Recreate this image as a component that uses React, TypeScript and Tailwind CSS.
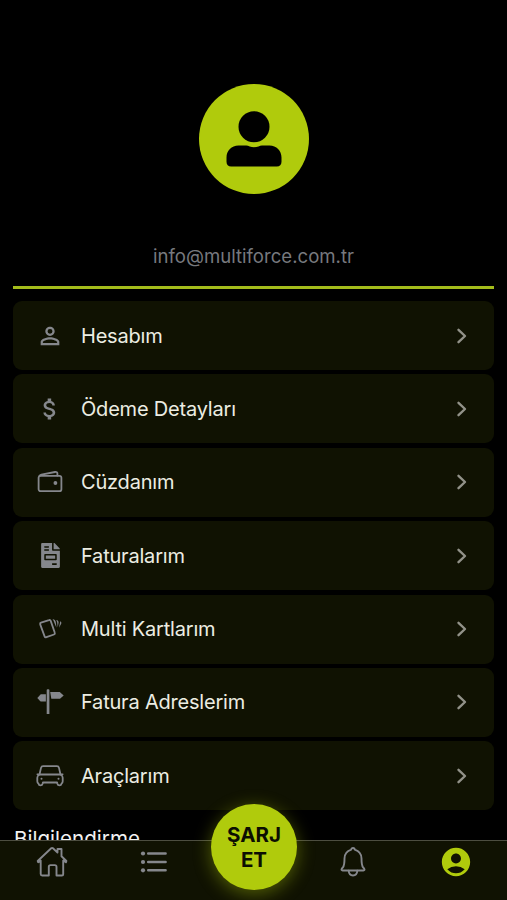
import type { ReactNode } from 'react'
import { FaFileInvoice } from 'react-icons/fa'
import { MdAccountCircle, MdAttachMoney, MdPersonOutline } from 'react-icons/md'

const stroke = {
  fill: 'none',
  stroke: 'currentColor',
  strokeLinecap: 'round',
  strokeLinejoin: 'round'
} as const

const WalletIcon = () => (
  <svg width="26" height="24" viewBox="0 0 26 24" strokeWidth="1.8" {...stroke}>
    <rect x="1.6" y="5.8" width="22.8" height="15.4" rx="2" />
    <path d="M2.4 6C2.8 5.2 3.4 4.9 4.4 4.6L18 2c1.6-.3 2.4.3 2.4 1.5v2" />
    <circle cx="18.4" cy="13" r="1.9" fill="currentColor" stroke="none" />
  </svg>
)

const CardsIcon = () => (
  <svg width="24" height="24" viewBox="0 0 24 24" strokeWidth="1.8" {...stroke}>
    <path d="M3 5.7l8-2.6c.8-.3 1.400 0 1.700.8l4.100 11.900c.3.800 0 1.400-.8 1.700l-7.600 2.700c-.8.3-1.500 0-1.800-.8L2.200 7.400c-.3-.8 0-1.400.8-1.700z" />
    <g fill="currentColor" stroke="none">
      <path d="M14.500 1.900c2 .4 3 1.500 3.300 3.100l.6 5.800-3.100-7.600z" />
      <path d="M18.300 2.900c1.700.3 2.400 1.200 2.300 2.600l-.8 4.800-.7-5.300z" />
      <path d="M22.200 4.300c1.100.5 1.400 1.400 1 2.500l-2.200 3.900.9-4.600z" />
    </g>
  </svg>
)

const SignsIcon = () => (
  <svg width="27" height="26" viewBox="0 0 27 26" fill="currentColor">
    <path d="M9.700 1c0-.5.4-.8.9-.8h.9c.5 0 .9.3.9.8v24H9.700z" />
    <path d="M.3 9l3-3.300c.3-.3.600-.4 1-.4h4.600v7.300H4.300c-.4 0-.7-.1-1-.4z" />
    <path d="M13.200 3h9.100c.4 0 .7.100 1 .4l3.400 3-3.400 3c-.3.300-.6.400-1 .4h-8z" />
  </svg>
)

const CarIcon = () => (
  <svg width="28" height="22" viewBox="0 0 28 22" strokeWidth="1.8" {...stroke}>
    <path d="M3.500 9.500L5 2.900c.3-1.200.9-1.700 2.100-1.700h13.800c1.200 0 1.800.5 2.100 1.700l1.500 6.600" />
    <path d="M3.500 9.500h21c1.500.7 2.200 1.800 2.200 3.300v3.400c0 1-.3 1.700-1.100 2.300-.3 1.200-1 1.900-2.100 1.900-1.200 0-1.900-.7-2.200-1.900l-.2-1H6.900l-.2 1c-.3 1.200-1 1.900-2.200 1.900-1.100 0-1.800-.7-2.100-1.900-.8-.6-1.100-1.300-1.100-2.300v-3.400c0-1.500.7-2.600 2.200-3.300z" />
    <path d="M1.200 9.300h2M26.800 9.300h-2" strokeWidth="1.500" />
    <circle cx="5.500" cy="13.700" r="1" fill="currentColor" stroke="none" />
    <circle cx="22.500" cy="13.700" r="1" fill="currentColor" stroke="none" />
  </svg>
)

const HomeIcon = () => (
  <svg width="32" height="32" viewBox="0 0 32 32" strokeWidth="1.9" {...stroke}>
    <path d="M4.700 14.500L2.200 16.300 1.700 15 15.200 2.300c.7-.6 1.100-.6 1.800 0l4.500 4.300V3h4v7.300l4.900 4.700-.5 1.300-2.700-1.800v13.700c0 .9-.4 1.300-1.300 1.300h-5.400v-8.700c0-1.100-.6-1.700-1.700-1.700h-4.300c-1.100 0-1.700.6-1.700 1.700v8.700H6.200c-1 0-1.500-.5-1.500-1.500z" />
  </svg>
)

const ListIcon = () => (
  <svg width="28" height="24" viewBox="0 0 28 24" strokeWidth="2.5" {...stroke}>
    <path d="M8.200 3.500h17.400M8.200 12h17.400M8.200 20.300h17.400" />
    <g fill="currentColor" stroke="none">
      <circle cx="3" cy="3.500" r="2.100" />
      <circle cx="3" cy="12" r="2.100" />
      <circle cx="3" cy="20.300" r="2.100" />
    </g>
  </svg>
)

const BellIcon = () => (
  <svg width="26" height="32" viewBox="0 0 26 32" strokeWidth="1.9" {...stroke}>
    <path d="M11.300 3.600c0-1 .6-1.600 1.700-1.600s1.700.6 1.700 1.600c4.500 1.400 6.800 4.500 6.800 8.900 0 4.300.3 7.200 1.600 8.900l1.100 1.300c.6.900.3 1.800-.8 1.800H2.600c-1.100 0-1.400-.9-.8-1.800l1.100-1.300C4.200 19.700 4.500 16.800 4.500 12.500c0-4.400 2.300-7.500 6.800-8.900z" />
    <path d="M8.700 24.800c.2 3.100 1.800 4.700 4.300 4.700s4.100-1.600 4.300-4.700" />
  </svg>
)

const Avatar = () => (
  <div className="flex h-[110px] w-[110px] items-center justify-center rounded-full bg-[#b0cb0c]">
    <svg width="56" height="56" viewBox="0 0 56 56" fill="#000">
      <circle cx="28" cy="15.700" r="15.500" />
      <path d="M12.500 34.600h7.700c1.300 0 2.300.3 3.500.8 2.800 1.100 6 1.100 8.800 0 1.200-.5 2.200-.8 3.500-.8h7.500c7 0 12 5.300 12 12v4.200c0 3-1.700 4.700-4.700 4.700H5.200c-3 0-4.700-1.700-4.700-4.700v-4.200c0-6.700 5-12 12-12z" />
    </svg>
  </div>
)

const MenuRow = ({ icon, label }: { icon: ReactNode; label: string }) => (
  <button className="flex h-[69px] w-full shrink-0 items-center rounded-[9px] bg-[#101202] pr-[25px] pl-[21px] text-left">
    <span className="flex w-8 justify-center text-[#85878c]">{icon}</span>
    <span className="ml-[15px] flex-1 text-[20px] tracking-[-0.2px] text-[#ecede2]">
      {label}
    </span>
    <svg width="14" height="18" viewBox="0 0 14 18" strokeWidth="2.4" className="text-[#929289]" {...stroke}>
      <path d="M3.500 2.800L10 9l-6.500 6.200" />
    </svg>
  </button>
)

const menu = [
  { label: 'Hesabım', icon: <MdPersonOutline size={28} /> },
  { label: 'Ödeme Detayları', icon: <MdAttachMoney size={28} /> },
  { label: 'Cüzdanım', icon: <WalletIcon /> },
  { label: 'Faturalarım', icon: <FaFileInvoice size={25} /> },
  { label: 'Multi Kartlarım', icon: <CardsIcon /> },
  { label: 'Fatura Adreslerim', icon: <SignsIcon /> },
  { label: 'Araçlarım', icon: <CarIcon /> }
]

const TabBar = () => (
  <nav className="relative flex h-[60px] shrink-0 border-t border-[#4c4d40] bg-[#101202] px-px text-[#85878c]">
    <button className="flex h-[42px] flex-1 items-center justify-center pl-px">
      <HomeIcon />
    </button>
    <button className="flex h-[42px] flex-1 items-center justify-center pl-[3px]">
      <ListIcon />
    </button>
    <div className="flex-1" />
    <button className="flex h-[42px] flex-1 items-center justify-center pr-1">
      <BellIcon />
    </button>
    <button className="flex h-[42px] flex-1 items-center justify-center text-[#b0cb0c]">
      <MdAccountCircle size={34} />
    </button>
    <button className="absolute -top-[37px] left-[211px] flex h-[86px] w-[86px] items-center justify-center rounded-full bg-[#b0cb0c] text-center text-[20.5px] leading-[25px] font-bold text-[#0c0e02] shadow-[0_4px_18px_rgba(176,203,12,0.42)]">
      ŞARJ
      <br />
      ET
    </button>
  </nav>
)

const App = () => {
  return (
    <div className="flex h-[900px] w-[507px] flex-col overflow-hidden bg-black font-['Inter',sans-serif]">
      <main className="flex min-h-0 flex-1 flex-col overflow-hidden px-[13px] pt-[84px]">
        <div className="flex shrink-0 flex-col items-center border-b-[3px] border-[#a4bc1b] pb-[17px]">
          <Avatar />
          <p className="mt-[49px] text-[18.6px] leading-[26px] text-[#77797e]">
            info@multiforce.com.tr
          </p>
        </div>
        <div className="mt-3 flex shrink-0 flex-col gap-[4.4px]">
          {menu.map((item) => (
            <MenuRow key={item.label} icon={item.icon} label={item.label} />
          ))}
        </div>
        <h2 className="mt-[15px] ml-px shrink-0 text-[20.6px] leading-7 text-[#f2f2f2]">
          Bilgilendirme
        </h2>
      </main>
      <TabBar />
    </div>
  )
}

export default App
